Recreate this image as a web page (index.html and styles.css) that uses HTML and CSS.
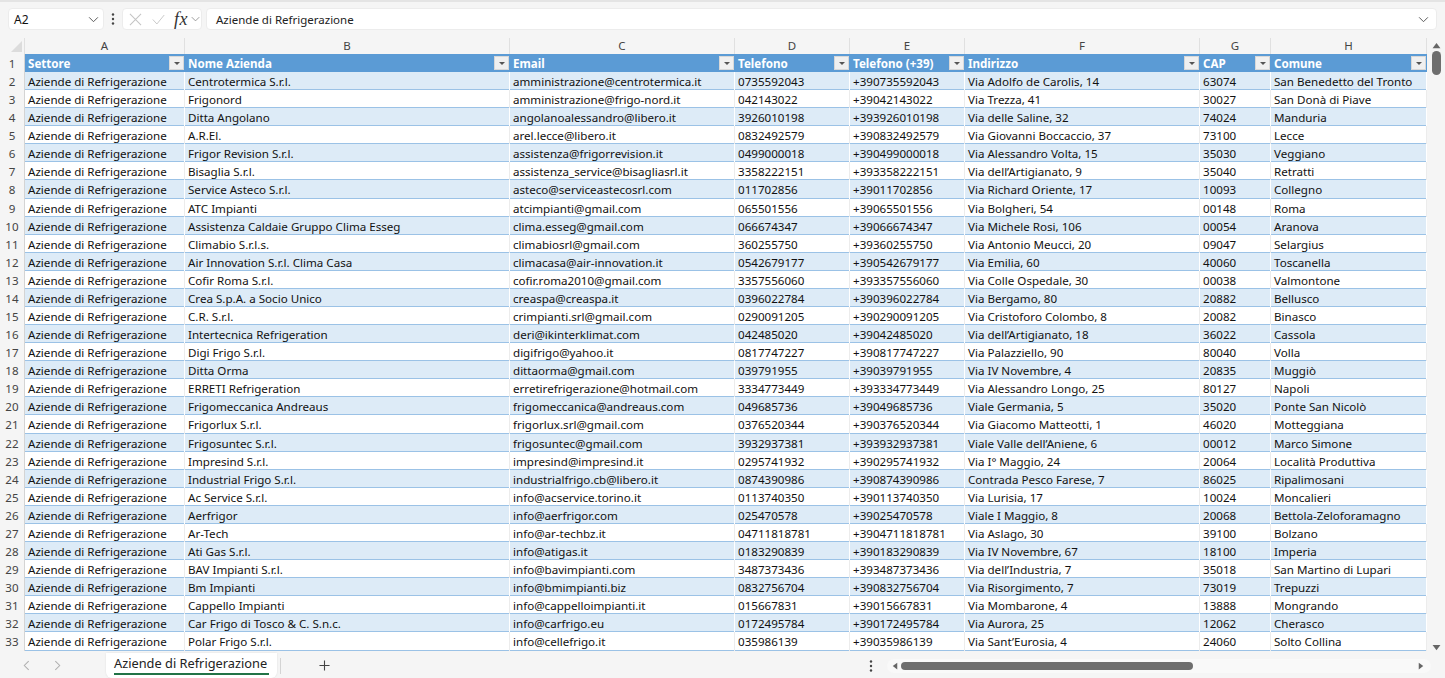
FILE: index.html
```html
<!DOCTYPE html>
<html lang="it">
<head>
<meta charset="utf-8">
<title>Aziende di Refrigerazione</title>
<link rel="stylesheet" href="styles.css">
</head>
<body>
<header class="formula">
  <div class="namebox"><span>A2</span><svg class="chev" viewBox="0 0 12 8"><path d="M1 1.5 6 6.5 11 1.5"/></svg></div>
  <svg class="dots" viewBox="0 0 4 14"><circle cx="2" cy="2.5" r="1.2"/><circle cx="2" cy="7" r="1.2"/><circle cx="2" cy="11.500" r="1.2"/></svg>
  <div class="fxbox">
    <svg class="fxi" viewBox="0 0 14 14"><path d="M1 1 13 13M13 1 1 13"/></svg>
    <svg class="fxi" viewBox="0 0 16 14"><path d="M1 7 6 12.500 15 1.500"/></svg>
    <span class="fx">fx</span>
    <svg class="chev small" viewBox="0 0 12 8"><path d="M1 1.500 6 6.500 11 1.500"/></svg>
  </div>
  <div class="fbar"><span>Aziende di Refrigerazione</span><svg class="chev" viewBox="0 0 12 8"><path d="M1 1.500 6 6.500 11 1.500"/></svg></div>
</header>
<main class="work">
  <div class="sheet">
    <div class="row cols"><div class="corner"><i></i></div><div>A</div><div>B</div><div>C</div><div>D</div><div>E</div><div>F</div><div>G</div><div>H</div></div>
    <div class="row head"><b>1</b><div>Settore<i></i></div><div>Nome Azienda<i></i></div><div>Email<i></i></div><div>Telefono<i></i></div><div>Telefono (+39)<i></i></div><div>Indirizzo<i></i></div><div>CAP<i></i></div><div>Comune<i></i></div></div>
    <div class="row"><b>2</b><div>Aziende di Refrigerazione</div><div>Centrotermica S.r.l.</div><div>amministrazione@centrotermica.it</div><div>0735592043</div><div>+390735592043</div><div>Via Adolfo de Carolis, 14</div><div>63074</div><div>San Benedetto del Tronto</div></div>
    <div class="row"><b>3</b><div>Aziende di Refrigerazione</div><div>Frigonord</div><div>amministrazione@frigo-nord.it</div><div>042143022</div><div>+39042143022</div><div>Via Trezza, 41</div><div>30027</div><div>San Donà di Piave</div></div>
    <div class="row"><b>4</b><div>Aziende di Refrigerazione</div><div>Ditta Angolano</div><div>angolanoalessandro@libero.it</div><div>3926010198</div><div>+393926010198</div><div>Via delle Saline, 32</div><div>74024</div><div>Manduria</div></div>
    <div class="row"><b>5</b><div>Aziende di Refrigerazione</div><div>A.R.El.</div><div>arel.lecce@libero.it</div><div>0832492579</div><div>+390832492579</div><div>Via Giovanni Boccaccio, 37</div><div>73100</div><div>Lecce</div></div>
    <div class="row"><b>6</b><div>Aziende di Refrigerazione</div><div>Frigor Revision S.r.l.</div><div>assistenza@frigorrevision.it</div><div>0499000018</div><div>+390499000018</div><div>Via Alessandro Volta, 15</div><div>35030</div><div>Veggiano</div></div>
    <div class="row"><b>7</b><div>Aziende di Refrigerazione</div><div>Bisaglia S.r.l.</div><div>assistenza_service@bisagliasrl.it</div><div>3358222151</div><div>+393358222151</div><div>Via dell’Artigianato, 9</div><div>35040</div><div>Retratti</div></div>
    <div class="row"><b>8</b><div>Aziende di Refrigerazione</div><div>Service Asteco S.r.l.</div><div>asteco@serviceastecosrl.com</div><div>011702856</div><div>+39011702856</div><div>Via Richard Oriente, 17</div><div>10093</div><div>Collegno</div></div>
    <div class="row"><b>9</b><div>Aziende di Refrigerazione</div><div>ATC Impianti</div><div>atcimpianti@gmail.com</div><div>065501556</div><div>+39065501556</div><div>Via Bolgheri, 54</div><div>00148</div><div>Roma</div></div>
    <div class="row"><b>10</b><div>Aziende di Refrigerazione</div><div>Assistenza Caldaie Gruppo Clima Esseg</div><div>clima.esseg@gmail.com</div><div>066674347</div><div>+39066674347</div><div>Via Michele Rosi, 106</div><div>00054</div><div>Aranova</div></div>
    <div class="row"><b>11</b><div>Aziende di Refrigerazione</div><div>Climabio S.r.l.s.</div><div>climabiosrl@gmail.com</div><div>360255750</div><div>+39360255750</div><div>Via Antonio Meucci, 20</div><div>09047</div><div>Selargius</div></div>
    <div class="row"><b>12</b><div>Aziende di Refrigerazione</div><div>Air Innovation S.r.l. Clima Casa</div><div>climacasa@air-innovation.it</div><div>0542679177</div><div>+390542679177</div><div>Via Emilia, 60</div><div>40060</div><div>Toscanella</div></div>
    <div class="row"><b>13</b><div>Aziende di Refrigerazione</div><div>Cofir Roma S.r.l.</div><div>cofir.roma2010@gmail.com</div><div>3357556060</div><div>+393357556060</div><div>Via Colle Ospedale, 30</div><div>00038</div><div>Valmontone</div></div>
    <div class="row"><b>14</b><div>Aziende di Refrigerazione</div><div>Crea S.p.A. a Socio Unico</div><div>creaspa@creaspa.it</div><div>0396022784</div><div>+390396022784</div><div>Via Bergamo, 80</div><div>20882</div><div>Bellusco</div></div>
    <div class="row"><b>15</b><div>Aziende di Refrigerazione</div><div>C.R. S.r.l.</div><div>crimpianti.srl@gmail.com</div><div>0290091205</div><div>+390290091205</div><div>Via Cristoforo Colombo, 8</div><div>20082</div><div>Binasco</div></div>
    <div class="row"><b>16</b><div>Aziende di Refrigerazione</div><div>Intertecnica Refrigeration</div><div>deri@ikinterklimat.com</div><div>042485020</div><div>+39042485020</div><div>Via dell’Artigianato, 18</div><div>36022</div><div>Cassola</div></div>
    <div class="row"><b>17</b><div>Aziende di Refrigerazione</div><div>Digi Frigo S.r.l.</div><div>digifrigo@yahoo.it</div><div>0817747227</div><div>+390817747227</div><div>Via Palazziello, 90</div><div>80040</div><div>Volla</div></div>
    <div class="row"><b>18</b><div>Aziende di Refrigerazione</div><div>Ditta Orma</div><div>dittaorma@gmail.com</div><div>039791955</div><div>+39039791955</div><div>Via IV Novembre, 4</div><div>20835</div><div>Muggiò</div></div>
    <div class="row"><b>19</b><div>Aziende di Refrigerazione</div><div>ERRETI Refrigeration</div><div>erretirefrigerazione@hotmail.com</div><div>3334773449</div><div>+393334773449</div><div>Via Alessandro Longo, 25</div><div>80127</div><div>Napoli</div></div>
    <div class="row"><b>20</b><div>Aziende di Refrigerazione</div><div>Frigomeccanica Andreaus</div><div>frigomeccanica@andreaus.com</div><div>049685736</div><div>+39049685736</div><div>Viale Germania, 5</div><div>35020</div><div>Ponte San Nicolò</div></div>
    <div class="row"><b>21</b><div>Aziende di Refrigerazione</div><div>Frigorlux S.r.l.</div><div>frigorlux.srl@gmail.com</div><div>0376520344</div><div>+390376520344</div><div>Via Giacomo Matteotti, 1</div><div>46020</div><div>Motteggiana</div></div>
    <div class="row"><b>22</b><div>Aziende di Refrigerazione</div><div>Frigosuntec S.r.l.</div><div>frigosuntec@gmail.com</div><div>3932937381</div><div>+393932937381</div><div>Viale Valle dell’Aniene, 6</div><div>00012</div><div>Marco Simone</div></div>
    <div class="row"><b>23</b><div>Aziende di Refrigerazione</div><div>Impresind S.r.l.</div><div>impresind@impresind.it</div><div>0295741932</div><div>+390295741932</div><div>Via I° Maggio, 24</div><div>20064</div><div>Località Produttiva</div></div>
    <div class="row"><b>24</b><div>Aziende di Refrigerazione</div><div>Industrial Frigo S.r.l.</div><div>industrialfrigo.cb@libero.it</div><div>0874390986</div><div>+390874390986</div><div>Contrada Pesco Farese, 7</div><div>86025</div><div>Ripalimosani</div></div>
    <div class="row"><b>25</b><div>Aziende di Refrigerazione</div><div>Ac Service S.r.l.</div><div>info@acservice.torino.it</div><div>0113740350</div><div>+390113740350</div><div>Via Lurisia, 17</div><div>10024</div><div>Moncalieri</div></div>
    <div class="row"><b>26</b><div>Aziende di Refrigerazione</div><div>Aerfrigor</div><div>info@aerfrigor.com</div><div>025470578</div><div>+39025470578</div><div>Viale I Maggio, 8</div><div>20068</div><div>Bettola-Zeloforamagno</div></div>
    <div class="row"><b>27</b><div>Aziende di Refrigerazione</div><div>Ar-Tech</div><div>info@ar-techbz.it</div><div>04711818781</div><div>+3904711818781</div><div>Via Aslago, 30</div><div>39100</div><div>Bolzano</div></div>
    <div class="row"><b>28</b><div>Aziende di Refrigerazione</div><div>Ati Gas S.r.l.</div><div>info@atigas.it</div><div>0183290839</div><div>+390183290839</div><div>Via IV Novembre, 67</div><div>18100</div><div>Imperia</div></div>
    <div class="row"><b>29</b><div>Aziende di Refrigerazione</div><div>BAV Impianti S.r.l.</div><div>info@bavimpianti.com</div><div>3487373436</div><div>+393487373436</div><div>Via dell’Industria, 7</div><div>35018</div><div>San Martino di Lupari</div></div>
    <div class="row"><b>30</b><div>Aziende di Refrigerazione</div><div>Bm Impianti</div><div>info@bmimpianti.biz</div><div>0832756704</div><div>+390832756704</div><div>Via Risorgimento, 7</div><div>73019</div><div>Trepuzzi</div></div>
    <div class="row"><b>31</b><div>Aziende di Refrigerazione</div><div>Cappello Impianti</div><div>info@cappelloimpianti.it</div><div>015667831</div><div>+39015667831</div><div>Via Mombarone, 4</div><div>13888</div><div>Mongrando</div></div>
    <div class="row"><b>32</b><div>Aziende di Refrigerazione</div><div>Car Frigo di Tosco &amp; C. S.n.c.</div><div>info@carfrigo.eu</div><div>0172495784</div><div>+390172495784</div><div>Via Aurora, 25</div><div>12062</div><div>Cherasco</div></div>
    <div class="row"><b>33</b><div>Aziende di Refrigerazione</div><div>Polar Frigo S.r.l.</div><div>info@cellefrigo.it</div><div>035986139</div><div>+39035986139</div><div>Via Sant’Eurosia, 4</div><div>24060</div><div>Solto Collina</div></div>
  </div>
  <aside class="vscroll">
    <svg viewBox="0 0 10 8"><path d="M5 1 9.500 7H.5z"/></svg>
    <span class="vthumb"></span>
    <svg class="down" viewBox="0 0 10 8"><path d="M5 7 9.500 1H.5z"/></svg>
  </aside>
</main>
<footer class="tabs">
  <svg class="nav" viewBox="0 0 8 12"><path d="M6.500 1 1.500 6 6.500 11"/></svg>
  <svg class="nav" viewBox="0 0 8 12"><path d="M1.500 1 6.500 6 1.500 11"/></svg>
  <div class="tab"><span>Aziende di Refrigerazione</span></div>
  <span class="sep"></span>
  <svg class="plus" viewBox="0 0 12 12"><path d="M6 .5v11M.5 6h11"/></svg>
  <svg class="dots bottom" viewBox="0 0 4 14"><circle cx="2" cy="2.500" r="1.200"/><circle cx="2" cy="7" r="1.200"/><circle cx="2" cy="11.500" r="1.200"/></svg>
  <div class="hscroll">
    <svg viewBox="0 0 8 10"><path d="M1 5 7 .5v9z"/></svg>
    <span class="hthumb"></span>
    <svg viewBox="0 0 8 10"><path d="M7 5 1 .5v9z"/></svg>
  </div>
</footer>
</body>
</html>
```

FILE: styles.css
```css
* { box-sizing: border-box; }
html, body { margin: 0; height: 100%; }
body {
  width: 1445px; height: 678px; overflow: hidden;
  background: #f5f5f5;
  border-top: 2px solid #e4e4e4;
  font-family: "Noto Sans", sans-serif;
  font-size: 11.6px;
  color: #111;
  display: flex; flex-direction: column;
}
.formula { display: flex; align-items: center; height: 22px; margin: 6px 0 8px 8px; flex: none; }
.namebox, .fxbox, .fbar {
  height: 22px; background: #fff; border: 1px solid #ececec; border-radius: 4px;
  display: flex; align-items: center;
}
.namebox { width: 96px; padding: 0 2px 0 5px; justify-content: space-between; font-size: 12px; }
.chev { width: 11px; height: 7px; fill: none; stroke: #555; stroke-width: 1.100; margin-right: 2px; }
.chev.small { width: 9px; height: 6px; stroke: #888; margin: 0 0 0 3px; }
.dots { width: 4px; height: 14px; fill: #444; margin: 0 7px 0 7px; flex: none; }
.fxbox { width: 80px; padding-left: 6px; }
.fxi { width: 13px; height: 13px; fill: none; stroke: #c4c4c4; stroke-width: 1.100; margin-right: 10px; flex: none; }
.fx { font: italic 18px/20px "Liberation Serif", serif; margin-left: -1px; color: #333; letter-spacing: .5px; }
.fbar { width: 1231px; margin-left: 4px; padding: 0 5px 0 9px; justify-content: space-between; font-size: 11.5px; color: #222; }
.work { display: flex; height: 615px; flex: none; }
.sheet { width: 1427px; flex: none; overflow: hidden; }
.row {
  display: grid;
  grid-template-columns: 25px 160px 325px 225px 115px 115px 235px 71px 156px;
  grid-template-rows: minmax(0, 1fr);
  height: 18.09px;
  line-height: 18px;
  white-space: nowrap;
}
.row > b { font-weight: 400; text-align: center; color: #444; background: #f5f5f5; border-right: 1px solid #d4d4d4; padding-top: 1px; overflow: hidden; }
.row > div { padding: 1px 0 0 3px; border-right: 1px solid #ececec; box-shadow: inset 0 -1px 0 #9bc2e6; overflow: hidden; position: relative; background: #fff; }
.row:nth-child(odd) > div { background: #ddebf7; border-right-color: #fff; }
.row.cols { height: 16px; line-height: 15px; }
.row.cols > div { background: #f5f5f5; border-right: 1px solid #e0e0e0; box-shadow: none; text-align: center; color: #444; padding: 0; font-size: 11.5px; }
.row.cols > .corner { position: relative; background: #f5f5f5; }
.corner i { position: absolute; right: 2px; bottom: 2px; width: 0; height: 0; border-style: solid; border-width: 0 0 11px 11px; border-color: transparent transparent #dcdcdc transparent; }
.row.head { height: 18px; }
.row.head > div { background: #5b9bd5; color: #fff; font-weight: 700; border-right-color: #5b9bd5; box-shadow: none; }
.row.head i {
  position: absolute; right: 0; top: 2px; width: 15px; height: 14px;
  background: #f0f0f0; border: 1px solid #d8d8d8;
}
.row.head i::after {
  content: ""; position: absolute; left: 4px; top: 5px; width: 0; height: 0;
  border-style: solid; border-width: 3px 3px 0; border-color: #555 transparent transparent;
}
.vscroll { flex: 1; position: relative; display: flex; flex-direction: column; align-items: center; padding-top: 4px; }
.vscroll svg { width: 9px; height: 7px; fill: #666; flex: none; }
.vscroll .down { margin-top: auto; margin-bottom: 2px; }
.vthumb { width: 9px; height: 24px; margin-top: 2px; background: #6e6e6e; border-radius: 5px; }
.tabs { display: flex; align-items: center; height: 25px; flex: none; position: relative; }
.nav { width: 7px; height: 11px; fill: none; stroke: #b0b0b0; stroke-width: 1.200; margin-left: 23px; flex: none; }
.nav + .nav { margin-left: 24px; }
.tab { margin-left: 45px; height: 25px; width: 171px; background: #fff; border-radius: 0 0 6px 6px; padding: 0 8px; box-shadow: 0 0 2px #ddd; font-size: 12.8px; }
.tab span { display: block; height: 22px; line-height: 21px; color: #222; border-bottom: 2px solid #217346; white-space: nowrap; }
.sep { width: 1px; height: 16px; background: #d4d4d4; margin-left: 3px; }
.plus { width: 11px; height: 11px; stroke: #444; stroke-width: 1.200; fill: none; margin-left: 38px; flex: none; }
.dots.bottom { margin: 0 0 0 539px; }
.hscroll {
  margin-left: 14px; width: 544px; height: 14px; background: #f9f9f9; border-radius: 7px;
  display: flex; align-items: center; padding: 0 7px 0 5px;
}
.hscroll svg { width: 6px; height: 8px; fill: #666; flex: none; }
.hscroll svg:last-child { margin-left: auto; }
.hthumb { width: 292px; height: 8px; margin-left: 3px; background: #6e6e6e; border-radius: 4px; }
```
